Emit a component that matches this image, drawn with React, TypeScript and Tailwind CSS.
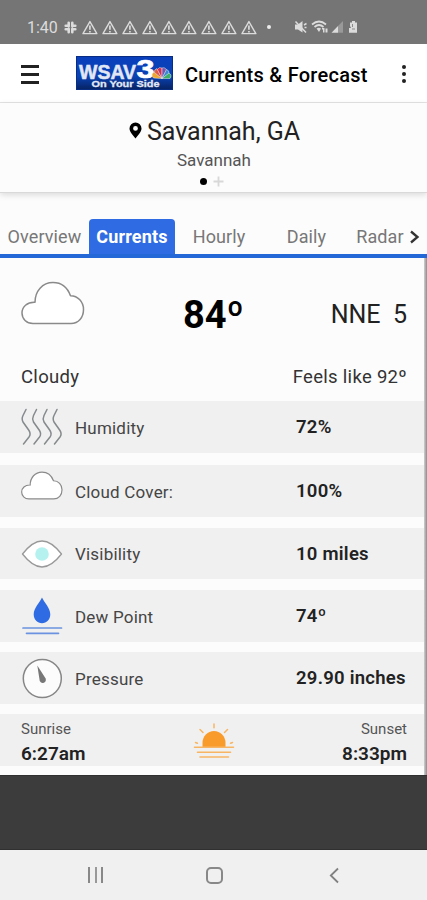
import type { ReactNode } from "react";

const TABS = ["Overview", "Currents", "Hourly", "Daily", "Radar"];

const TAB_WIDTHS = ["w-[89px]", "w-[86px]", "w-[88px]", "w-[87px]", "w-[60px]"];

function CloudIcon({ className, strokeWidth }: { className: string; strokeWidth: number }) {
  return (
    <svg className={className} viewBox="0 0 64 44" fill="white" stroke="#8a8a8a" strokeWidth={strokeWidth}>
      <path d="M12 42.500C5.500 42.500 1 37.800 1 32C1 25.800 6 21 14 21.300C14 10 21.500 1.500 32 1.500C40.500 1.500 46.500 6.500 49.500 14.800C57 14.800 62.500 21 62.500 28.500C62.500 36.500 57.500 42.500 50 42.500Z" strokeLinejoin="round" />
    </svg>
  );
}

function HumidityIcon() {
  return (
    <svg className="w-[42px] h-[38px]" viewBox="0 0 42 38" fill="none" stroke="#858a8c" strokeWidth="1.500" strokeLinecap="round">
      {[0, 10.5, 21, 31].map((x) => (
        <path key={x} transform={`translate(${x} 0)`} d="M5 1.500L2 7.500C1 9.500 1 12 2 14L8 22.500C9.500 25 9.500 27 8 29L2.500 36" />
      ))}
    </svg>
  );
}

function EyeIcon() {
  return (
    <svg className="w-[42px] h-[30px]" viewBox="0 0 42 30">
      <path d="M1.500 15C7 8 14 2 21 2C28 2 35 8 40.500 15C35 22 28 28 21 28C14 28 7 22 1.500 15Z" fill="#fff" stroke="#999" strokeWidth="1.3" strokeLinejoin="round" />
      <circle cx="21" cy="15" r="6.800" fill="#b5f1ee" />
    </svg>
  );
}

function DewIcon() {
  return (
    <svg className="w-[42px] h-[38px]" viewBox="0 0 42 38">
      <path d="M21 0.500C23 5 29.300 11 29.300 17.500C29.300 22.500 25.500 26.200 21 26.200C16.500 26.200 12.700 22.500 12.700 17.500C12.700 11 19 5 21 0.500Z" fill="#2f6be3" />
      <path d="M2 31H40.500M5.500 36.300H37.500" stroke="#6a92e0" strokeWidth="1.700" strokeLinecap="round" />
    </svg>
  );
}

function GaugeIcon() {
  return (
    <svg className="w-[42px] h-[42px]" viewBox="0 0 42 42">
      <circle cx="21.300" cy="21.500" r="19" fill="#fcfcfc" stroke="#868686" strokeWidth="1.500" />
      <path d="M16.300 8.500L18.500 22.500A3.200 3.200 0 1 0 24 20.500Z" fill="#777" />
    </svg>
  );
}

function SunIcon() {
  return (
    <svg className="w-[42px] h-[36px]" viewBox="0 0 42 36" fill="none" stroke="#f7b563" strokeLinecap="round">
      <path d="M9.500 24.500V20A11.500 12 0 0 1 32.500 20V24.500Z" fill="#f99b2b" stroke="none" />
      <path d="M21 1V4.700M7 6.500L10 9.500M34.500 6.500L31.500 9.500M2.500 19.500L4.500 20.300M39.500 19.500L37.500 20.300" strokeWidth="1.500" />
      <path d="M1.500 24.300H40.500M4.500 29.300H37.500M7 34H35.500" strokeWidth="1.600" />
    </svg>
  );
}

function Logo() {
  return (
    <svg className="w-[97px] h-[34px]" viewBox="0 0 97 34" fontFamily="'Liberation Sans', Arial, sans-serif" fontWeight="bold">
      <defs>
        <linearGradient id="logoBg" x1="0" y1="0" x2="0" y2="1">
          <stop offset="0" stopColor="#0a3fbd" />
          <stop offset="0.6" stopColor="#0a43b4" />
          <stop offset="1" stopColor="#06215f" />
        </linearGradient>
      </defs>
      <rect width="97" height="34" fill="url(#logoBg)" />
      <rect x="0.500" y="0.500" width="96" height="33" fill="none" stroke="#092d83" />
      <text x="3" y="22.500" fontSize="19.500" textLength="57" lengthAdjust="spacingAndGlyphs" fill="#e2e7f4" stroke="#e2e7f4" strokeWidth="0.500">WSAV</text>
      <text x="60.500" y="22.300" fontSize="25.500" textLength="18" lengthAdjust="spacingAndGlyphs" fill="#fff" stroke="#fff" strokeWidth="0.700">3</text>
      <g stroke="#e8eaf0" strokeWidth="0.500">
        <path d="M86 22.500L77.500 22A3.500 3.500 0 0 1 78 16Z" fill="#f0a52d" />
        <path d="M86 22.500L78.500 16.500A3.500 3.500 0 0 1 81 12.500Z" fill="#e4593b" />
        <path d="M86 22.500L81.500 13.500A3.300 3.300 0 0 1 86 12Z" fill="#d32e52" />
        <path d="M86 22.500V12A3.300 3.300 0 0 1 90.500 14Z" fill="#7854aa" />
        <path d="M86 22.500L90.500 13.500A3.500 3.500 0 0 1 93 17.500Z" fill="#3988d1" />
        <path d="M86 22.500L93 17A3.500 3.500 0 0 1 94 22.500Z" fill="#3cae65" />
      </g>
      <text x="15.500" y="31.200" fontSize="9.500" textLength="68" lengthAdjust="spacingAndGlyphs" fill="#e3e9f6" stroke="#e3e9f6" strokeWidth="0.300">On Your Side</text>
    </svg>
  );
}

function StatusBar() {
  return (
    <div className="flex h-11 items-end bg-[#757575] pb-[6px] pl-[27px] text-[#dcdcdc]">
      <span className="w-[37px] text-[16px] leading-[20px]">1:40</span>
      <svg className="mb-[4px] h-[13px] w-[13px]" viewBox="0 0 13 13" stroke="currentColor" strokeWidth="2.600" strokeLinecap="round">
        <path d="M4.700 1.700V5.300M8.300 1.700V5.300M4.700 7.700V11.300M8.300 7.700V11.300M1.700 4.700H4.700M8.300 4.700H11.300M1.700 8.300H4.700M8.300 8.300H11.300" />
      </svg>
      <div className="mb-[3px] ml-[5px] flex gap-[4px]">
        {[...Array(9)].map((_, i) => (
          <svg key={i} className="h-[15px] w-[15.850px]" viewBox="0 0 16 15" fill="none" stroke="currentColor" strokeWidth="1.400" strokeLinejoin="round">
            <path d="M8 1.500L15 13.700H1Z" />
            <path d="M8 5.500V9.800M8 11V12.600" strokeWidth="1.700" />
          </svg>
        ))}
      </div>
      <span className="mb-[9px] ml-[10px] h-1 w-1 rounded-full bg-[#ececec]" />
      <svg className="mb-[4px] ml-[23px] h-[14px] w-[66px]" viewBox="0 0 66 14" fill="currentColor">
        <path d="M1 4.500H4L8.500 1V12.500L4 9.500H1Z" />
        <path d="M1.500 1.500L12 12.500M10 5L12.500 3.500M10.500 7.500H12.500" stroke="currentColor" strokeWidth="1.500" />
        <path d="M18 4.500Q25 -1.500 32 4.500M20.500 7Q25 3 29.500 7" fill="none" stroke="currentColor" strokeWidth="1.700" />
        <path d="M22.500 8.500Q25 6.800 27 8.500L25 12ZM28 8L30.500 8V12.500H29V9.500H28ZM31.500 8.500H33.500V12.500H31.500Z" />
        <path d="M37.500 12.800L44 6V12.800Z" />
        <path d="M44 6L49 1V12.800H44Z" opacity="0.350" />
        <path d="M56 2.500H58V1H61V2.500H63V12.800H55V8H57L56 6Z" />
        <path d="M58.500 4V7M58 9H61" stroke="#8b8b8b" strokeWidth="1" />
      </svg>
    </div>
  );
}

function DetailRow({ icon, label, value, className }: {
  icon: ReactNode;
  label: string;
  value: string;
  className: string;
}) {
  return (
    <div className={`flex items-center bg-[#f0f0f0] pl-[21px] ${className}`}>
      <div className="flex w-[54px]">{icon}</div>
      <span className="w-[221px] pt-[3px] text-[17px] tracking-[0.200px] text-[#454545]">{label}</span>
      <span className="whitespace-nowrap pt-[2px] text-[18.500px] font-semibold tracking-[0.250px] text-[#222]">{value}</span>
    </div>
  );
}

export default function App() {
  return (
    <div className="flex h-[900px] w-[427px] flex-col overflow-hidden bg-[#fcfcfc] font-['Roboto',sans-serif] text-black">
      <StatusBar />

      {/* App bar */}
      <header className="flex h-[59px] items-center border-b border-[#e4e4e4] bg-white pl-[21px]">
        <div className="mt-[2px] flex w-[55px] flex-col gap-[5px]">
          <span className="h-[3px] w-[18px] bg-[#222]" />
          <span className="h-[3px] w-[18px] bg-[#222]" />
          <span className="h-[3px] w-[18px] bg-[#222]" />
        </div>
        <Logo />
        <h1 className="ml-[12px] mt-[4px] w-[217px] whitespace-nowrap text-[20px] font-medium tracking-[0.270px]">Currents &amp; Forecast</h1>
        <div className="mt-[2px] flex flex-col gap-[3px]">
          <span className="h-[4px] w-[4px] rounded-full bg-[#222]" />
          <span className="h-[4px] w-[4px] rounded-full bg-[#222]" />
          <span className="h-[4px] w-[4px] rounded-full bg-[#222]" />
        </div>
      </header>

      {/* Location */}
      <div className="relative flex h-[90px] flex-col items-center border-b border-[#d9d9d9] bg-[#fcfcfc] shadow-[0_2px_6px_#00000022]">
        <div className="ml-[2px] mt-[14px] flex h-[30px] items-center">
          <svg className="mb-[3px] mr-[5px] h-[17px] w-[13px]" viewBox="0 0 13 17">
            <path d="M6.500 0.500A6 6 0 0 0 0.500 6.500C0.500 10 4 13 6.500 16.500C9 13 12.500 10 12.500 6.500A6 6 0 0 0 6.500 0.500ZM6.500 4A2.400 2.400 0 1 1 6.500 8.800A2.400 2.400 0 1 1 6.500 4Z" fillRule="evenodd" />
          </svg>
          <h2 className="text-[25px] leading-[30px] text-[#222]">Savannah, GA</h2>
        </div>
        <p className="ml-[1px] mt-[3px] text-[17px] leading-[20px] text-[#555]">Savannah</p>
        <div className="mr-[4px] mt-[6px] flex items-center gap-[6px]">
          <span className="h-[7px] w-[7px] rounded-full bg-black" />
          <svg className="h-[11px] w-[11px]" viewBox="0 0 11 11" stroke="#d8d8d8" strokeWidth="1.800">
            <path d="M5.500 0.500V10.500M0.500 5.500H10.500" />
          </svg>
        </div>
      </div>

      {/* Tabs */}
      <nav className="flex h-[65px] items-end border-b-4 border-[#2467d6]">
        {TABS.map((tab, i) => (
          <div
            key={tab}
            className={`flex h-[35px] shrink-0 items-center justify-center whitespace-nowrap text-[18px] ${TAB_WIDTHS[i]} ${
              tab === "Currents" ? "rounded-t-[4px] bg-[#2f6be3] font-bold tracking-[0.200px] text-white" : "tracking-[0.100px] text-[#777]"
            }`}
          >
            {tab}
          </div>
        ))}
        <svg className="mb-[10px] h-[14px] w-[10px]" viewBox="0 0 10 14" fill="none" stroke="#333" strokeWidth="2.300">
          <path d="M1 1.500L7.500 7L1 12.500" />
        </svg>
      </nav>

      <div className="flex h-[517px] shrink-0">
        <main className="w-[424px]">
          {/* Current conditions */}
          <section className="flex h-[143px] flex-col pl-[21px] pr-[17px]">
            <div className="flex h-[96px] items-start">
              <CloudIcon className="mt-[23px] h-[44px] w-[64px]" strokeWidth={1.5} />
              <span className="ml-[98px] mt-[34px] text-[38px] font-bold leading-[46px]">84º</span>
              <span className="ml-auto mt-[41px] whitespace-pre text-[25px] leading-[32px] text-[#222]">NNE  5</span>
            </div>
            <div className="flex justify-between pt-[12px] text-[18.500px] leading-[22px] tracking-[0.300px] text-[#333]">
              <span>Cloudy</span>
              <span>Feels like 92º</span>
            </div>
          </section>

          <DetailRow className="h-[52px]" icon={<HumidityIcon />} label="Humidity" value="72%" />
          <DetailRow className="mt-[12px] h-[52px]" icon={<CloudIcon className="mb-[11px] h-[29px] w-[42px]" strokeWidth={1.8} />} label="Cloud Cover:" value="100%" />
          <DetailRow className="mt-[11px] h-[51px]" icon={<EyeIcon />} label="Visibility" value="10 miles" />
          <DetailRow className="mt-[11px] h-[52px]" icon={<DewIcon />} label="Dew Point" value="74º" />
          <DetailRow className="mt-[10px] h-[52px]" icon={<GaugeIcon />} label="Pressure" value="29.90 inches" />

          {/* Sun times */}
          <section className="mt-[10px] flex h-[52px] justify-between bg-[#f0f0f0] pl-[21px] pr-[17px] pt-[5px]">
            <div className="w-[90px]">
              <p className="text-[15px] leading-[20px] text-[#555]">Sunrise</p>
              <p className="mt-[4px] text-[19px] font-semibold leading-[22px] text-[#222]">6:27am</p>
            </div>
            <div className="mt-[4px]"><SunIcon /></div>
            <div className="w-[90px] text-right">
              <p className="text-[15px] leading-[20px] text-[#555]">Sunset</p>
              <p className="mt-[4px] text-[19px] font-semibold leading-[22px] text-[#222]">8:33pm</p>
            </div>
          </section>
        </main>
        <div className="w-[3px] bg-linear-to-r from-[#d0d0d0] to-[#8c8c8c]" />
      </div>

      <div className="h-[75px] shrink-0 border-b border-t border-[#303030] bg-[#3c3c3c]" />

      {/* System navigation */}
      <footer className="flex h-[50px] items-start bg-[#f0f0f0] pl-[88px] pt-[17px]">
        <div className="flex h-[16px] w-[118px] gap-[4.500px]">
          <span className="w-[2px] bg-[#888]" />
          <span className="w-[2px] bg-[#999]" />
          <span className="w-[2px] bg-[#888]" />
        </div>
        <div className="h-[17px] w-[17px] rounded-[5px] border-2 border-[#888]" />
        <svg className="ml-[106px] h-[17px] w-[10px]" viewBox="0 0 10 17" fill="none" stroke="#808080" strokeWidth="1.800">
          <path d="M9 1.500L1.800 8.500L9 15.500" />
        </svg>
      </footer>
    </div>
  );
}
